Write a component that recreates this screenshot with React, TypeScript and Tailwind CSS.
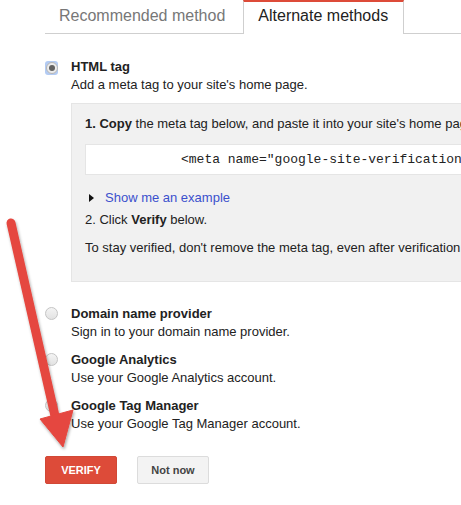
const sans = { fontFamily: '"Liberation Sans", Arial, sans-serif' };

function Radio({ checked = false }: { checked?: boolean }) {
  if (checked) {
    return (
      <div className="w-[15px] h-[14px] rounded-[3px] bg-[#b3cbf3] flex items-center justify-center">
        <div className="w-[12px] h-[12px] rounded-full border border-[#b5b5b5] bg-[#ececec] flex items-center justify-center">
          <div className="w-[6px] h-[6px] rounded-full bg-[#616161]" />
        </div>
      </div>
    );
  }
  return (
    <div className="w-[13px] h-[13px] rounded-full border border-[#c4c4c4] bg-gradient-to-b from-[#f4f4f4] to-[#e2e2e2]" />
  );
}

const options = [
  { title: 'Domain name provider', desc: 'Sign in to your domain name provider.' },
  { title: 'Google Analytics', desc: 'Use your Google Analytics account.' },
  { title: 'Google Tag Manager', desc: 'Use your Google Tag Manager account.' },
];

export default function App() {
  return (
    <div className="relative w-[461px] h-[505px] overflow-hidden bg-white text-[#222]" style={sans}>
      {/* Tabs */}
      <div className="flex pl-[45px] h-[34px] text-[16px]">
        <div className="pl-[14px] pr-[18px] pt-[4px] border-b border-[#cfcfcf] text-[#777]">Recommended method</div>
        <div className="pl-[14px] pr-[15px] pt-[2px] border-t-2 border-t-[#dd4b39] border-x border-x-[#cfcfcf] text-[#222]">
          Alternate methods
        </div>
        <div className="flex-1 border-b border-[#cfcfcf]" />
      </div>

      <div className="pl-[45px] pt-[24px] text-[13px] leading-[18px] w-[600px]">
        {/* HTML tag */}
        <div className="flex gap-[13px]">
          <div className="w-[13px] pt-[3px] flex justify-center">
            <Radio checked />
          </div>
          <div className="flex-1">
            <div className="font-bold">HTML tag</div>
            <div>Add a meta tag to your site's home page.</div>
            <div className="mt-[9px] bg-[#f1f1f1] border border-[#e5e5e5] pl-[13px] pt-[11px] pb-[24px] whitespace-nowrap">
              <div>
                <b>1. Copy</b> the meta tag below, and paste it into your site's home page, before the first &lt;body&gt; section.
              </div>
              <div
                className="mt-[11px] h-[31px] bg-white border border-[#e5e5e5] flex items-center pl-[95px]"
                style={{ fontFamily: '"Liberation Mono", "Courier New", monospace' }}
              >
                &lt;meta name="google-site-verification" content="a1b2c3d4e5f6" /&gt;
              </div>
              <div className="mt-[14px] flex items-center pl-[4px]">
                <svg width="5" height="8" viewBox="0 0 5 8" className="mr-[11px]">
                  <path d="M0 0 L5 4 L0 8 Z" fill="#111" />
                </svg>
                <span className="text-[#3b50cd]">Show me an example</span>
              </div>
              <div className="mt-[4px]">
                2. Click <b>Verify</b> below.
              </div>
              <div className="mt-[10px]">To stay verified, don't remove the meta tag, even after verification succeeds.</div>
            </div>
          </div>
        </div>

        {/* Other methods */}
        <div className="mt-[23px] flex flex-col gap-[10px]">
          {options.map((o) => (
            <div key={o.title} className="flex gap-[13px]">
              <div className="pt-[2px]">
                <Radio />
              </div>
              <div>
                <div className="font-bold">{o.title}</div>
                <div>{o.desc}</div>
              </div>
            </div>
          ))}
        </div>

        {/* Buttons */}
        <div className="mt-[23px] flex gap-[20px] text-[11px] font-bold">
          <button className="w-[72px] h-[28px] rounded-[2px] bg-[#dd4b39] border border-[#d14836] text-white">
            VERIFY
          </button>
          <button className="w-[72px] h-[28px] rounded-[2px] bg-[#f3f3f3] border border-[#dcdcdc] text-[#444]">
            Not now
          </button>
        </div>
      </div>

      {/* Annotation arrow */}
      <svg className="absolute left-0 top-0 pointer-events-none" width="461" height="505" viewBox="0 0 461 505">
        <defs>
          <filter id="sh" x="-50%" y="-50%" width="200%" height="200%">
            <feDropShadow dx="1" dy="2" stdDeviation="1.5" floodColor="#000" floodOpacity="0.35" />
          </filter>
        </defs>
        <g filter="url(#sh)" fill="#e5473f" stroke="#e5473f">
          <line x1="11" y1="223" x2="55" y2="416" strokeWidth="9" strokeLinecap="round" />
          <polygon points="40,419 73,410 63,447" strokeWidth="1" strokeLinejoin="round" />
        </g>
      </svg>
    </div>
  );
}
